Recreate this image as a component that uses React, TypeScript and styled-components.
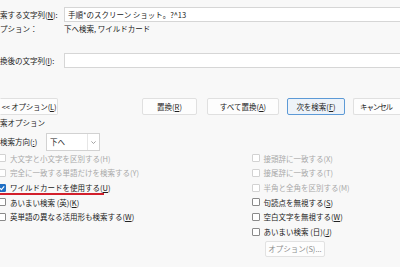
import React from 'react';
import styled, { createGlobalStyle } from 'styled-components';

const GlobalStyle = createGlobalStyle`
  html, body {
    margin: 0;
    padding: 0;
    background: #f8f8f8;
    overflow: hidden;
  }
  body {
    font-family: "Noto Sans CJK JP", "Noto Sans", sans-serif;
    color: #222;
  }
`;

const Dialog = styled.div`
  width: 400px;
  height: 267px;
  display: flex;
  flex-direction: column;
  font-size: 7.5px;
  line-height: 1;
`;

const Key = styled.span`
  text-decoration: underline;
  text-underline-offset: 1px;
`;

const FieldRow = styled.div<{ $top: number }>`
  display: flex;
  align-items: center;
  height: 15px;
  margin-top: ${(p) => p.$top}px;
`;

const FieldLabel = styled.div`
  width: 64px;
  flex-shrink: 0;
  white-space: nowrap;
`;

const TextBox = styled.div`
  flex: 1;
  height: 15px;
  box-sizing: border-box;
  background: #fff;
  border: 1px solid #d6d6d6;
  border-right: none;
  padding-left: 3px;
  display: flex;
  align-items: center;
  white-space: nowrap;
`;

const InfoRow = styled.div`
  display: flex;
  align-items: center;
  height: 14px;
  white-space: nowrap;
`;

const ButtonRow = styled.div`
  display: flex;
  align-items: center;
  height: 17px;
  margin-top: 30px;
`;

const ButtonGroup = styled.div`
  display: flex;
  margin-left: auto;
`;

const Button = styled.button<{ $w: number; $gap?: number; $primary?: boolean }>`
  width: ${(p) => p.$w}px;
  height: 17px;
  margin-left: ${(p) => p.$gap ?? 0}px;
  padding: 0;
  font: inherit;
  color: #222;
  background: ${(p) => (p.$primary ? '#eef3f9' : '#fdfdfd')};
  border: 1px solid ${(p) => (p.$primary ? '#5d9ad6' : '#e0e0e0')};
  border-radius: 2px;
  white-space: nowrap;
`;

const FirstButton = styled(Button)`
  border-left-color: transparent;
  border-radius: 0 2px 2px 0;
  letter-spacing: -0.2px;
`;

const CancelButton = styled(Button)`
  text-align: left;
  padding-left: 6px;
  letter-spacing: -1.1px;
  border-right: none;
  border-radius: 2px 0 0 2px;
`;

const SectionTitle = styled.div`
  height: 12px;
  margin-top: 2px;
  display: flex;
  align-items: center;
  white-space: nowrap;
`;

const DirectionRow = styled.div`
  display: flex;
  align-items: center;
  height: 18px;
  margin-top: 4px;
`;

const DirectionLabel = styled.div`
  width: 46px;
  white-space: nowrap;
`;

const Select = styled.div`
  width: 54px;
  height: 18px;
  box-sizing: border-box;
  background: #fff;
  border: 1px solid #d2d2d2;
  display: flex;
  align-items: stretch;
`;

const SelectValue = styled.div`
  flex: 1;
  display: flex;
  align-items: center;
  padding-left: 3px;
`;

const SelectArrow = styled.div`
  width: 11px;
  border-left: 1px solid #e6e6e6;
  display: flex;
  align-items: center;
  justify-content: center;
`;

const Options = styled.div`
  display: flex;
  margin-left: -2px;
`;

const Column = styled.div<{ $w?: number }>`
  display: flex;
  flex-direction: column;
  width: ${(p) => (p.$w ? `${p.$w}px` : 'auto')};
`;

const CheckItem = styled.div<{ $disabled?: boolean }>`
  position: relative;
  display: flex;
  align-items: center;
  height: 14.7px;
  white-space: nowrap;
  color: ${(p) => (p.$disabled ? '#a8a8a8' : '#222')};
`;

const Box = styled.span<{ $checked?: boolean; $disabled?: boolean }>`
  width: 8px;
  height: 8px;
  box-sizing: border-box;
  margin-right: 4px;
  border-radius: 1px;
  border: 1px solid
    ${(p) => (p.$checked ? '#1f6fc4' : p.$disabled ? '#d2d2d2' : '#8a8a8a')};
  background: ${(p) => (p.$checked ? '#1f6fc4' : '#fff')};
  display: flex;
  align-items: center;
  justify-content: center;
`;

const RedMark = styled.span`
  position: absolute;
  left: 0;
  top: 12.8px;
  width: 106px;
  height: 2px;
  background: #d21f2b;
`;

const OptionButton = styled.button`
  width: 60px;
  height: 16px;
  margin: 2px 0 0 13.5px;
  padding: 0;
  font: inherit;
  color: #8c8c8c;
  background: #fdfdfd;
  border: 1px solid #e2e2e2;
  border-radius: 2px;
  white-space: nowrap;
`;

interface CheckProps {
  label: React.ReactNode;
  checked?: boolean;
  disabled?: boolean;
  marked?: boolean;
}

const Check: React.FC<CheckProps> = ({ label, checked, disabled, marked }) => (
  <CheckItem $disabled={disabled}>
    <Box $checked={checked} $disabled={disabled}>
      {checked && (
        <svg width="6" height="6" viewBox="0 0 6 6">
          <path d="M0.8 3.1 L2.4 4.6 L5.2 1.4" fill="none" stroke="#fff" strokeWidth="1.1" />
        </svg>
      )}
    </Box>
    {label}
    {marked && <RedMark />}
  </CheckItem>
);

const App: React.FC = () => {
  return (
    <>
      <GlobalStyle />
      <Dialog>
        <FieldRow $top={7}>
          <FieldLabel>
            索する文字列(<Key>N</Key>):
          </FieldLabel>
          <TextBox>手順*のスクリーン ショット。?^13</TextBox>
        </FieldRow>
        <InfoRow>
          <FieldLabel>プション：</FieldLabel>
          下へ検索, ワイルドカード
        </InfoRow>
        <FieldRow $top={17}>
          <FieldLabel>
            換後の文字列(<Key>I</Key>):
          </FieldLabel>
          <TextBox />
        </FieldRow>

        <ButtonRow>
          <FirstButton $w={58}>
            &lt;&lt; オプション(<Key>L</Key>)
          </FirstButton>
          <ButtonGroup>
            <Button $w={55}>
              置換(<Key>R</Key>)
            </Button>
            <Button $w={72} $gap={10}>
              すべて置換(<Key>A</Key>)
            </Button>
            <Button $w={58} $gap={8} $primary>
              次を検索(<Key>F</Key>)
            </Button>
            <CancelButton $w={47} $gap={8}>
              キャンセル
            </CancelButton>
          </ButtonGroup>
        </ButtonRow>

        <SectionTitle>索オプション</SectionTitle>
        <DirectionRow>
          <DirectionLabel>
            検索方向(<Key>:</Key>)
          </DirectionLabel>
          <Select>
            <SelectValue>下へ</SelectValue>
            <SelectArrow>
              <svg width="5" height="3" viewBox="0 0 5 3">
                <path d="M0.4 0.4 L2.5 2.5 L4.6 0.4" fill="none" stroke="#8a8a8a" strokeWidth="0.8" />
              </svg>
            </SelectArrow>
          </Select>
        </DirectionRow>

        <Options>
          <Column $w={253.5}>
            <Check disabled label="大文字と小文字を区別する(H)" />
            <Check disabled label="完全に一致する単語だけを検索する(Y)" />
            <Check
              checked
              marked
              label={
                <>
                  ワイルドカードを使用する(<Key>U</Key>)
                </>
              }
            />
            <Check
              label={
                <>
                  あいまい検索 (英)(<Key>K</Key>)
                </>
              }
            />
            <Check
              label={
                <>
                  英単語の異なる活用形も検索する(<Key>W</Key>)
                </>
              }
            />
          </Column>
          <Column>
            <Check disabled label="接頭辞に一致する(X)" />
            <Check disabled label="接尾辞に一致する(T)" />
            <Check disabled label="半角と全角を区別する(M)" />
            <Check
              label={
                <>
                  句読点を無視する(<Key>S</Key>)
                </>
              }
            />
            <Check
              label={
                <>
                  空白文字を無視する(<Key>W</Key>)
                </>
              }
            />
            <Check
              label={
                <>
                  あいまい検索 (日)(<Key>J</Key>)
                </>
              }
            />
            <OptionButton>オプション(S)...</OptionButton>
          </Column>
        </Options>
      </Dialog>
    </>
  );
};

export default App;
